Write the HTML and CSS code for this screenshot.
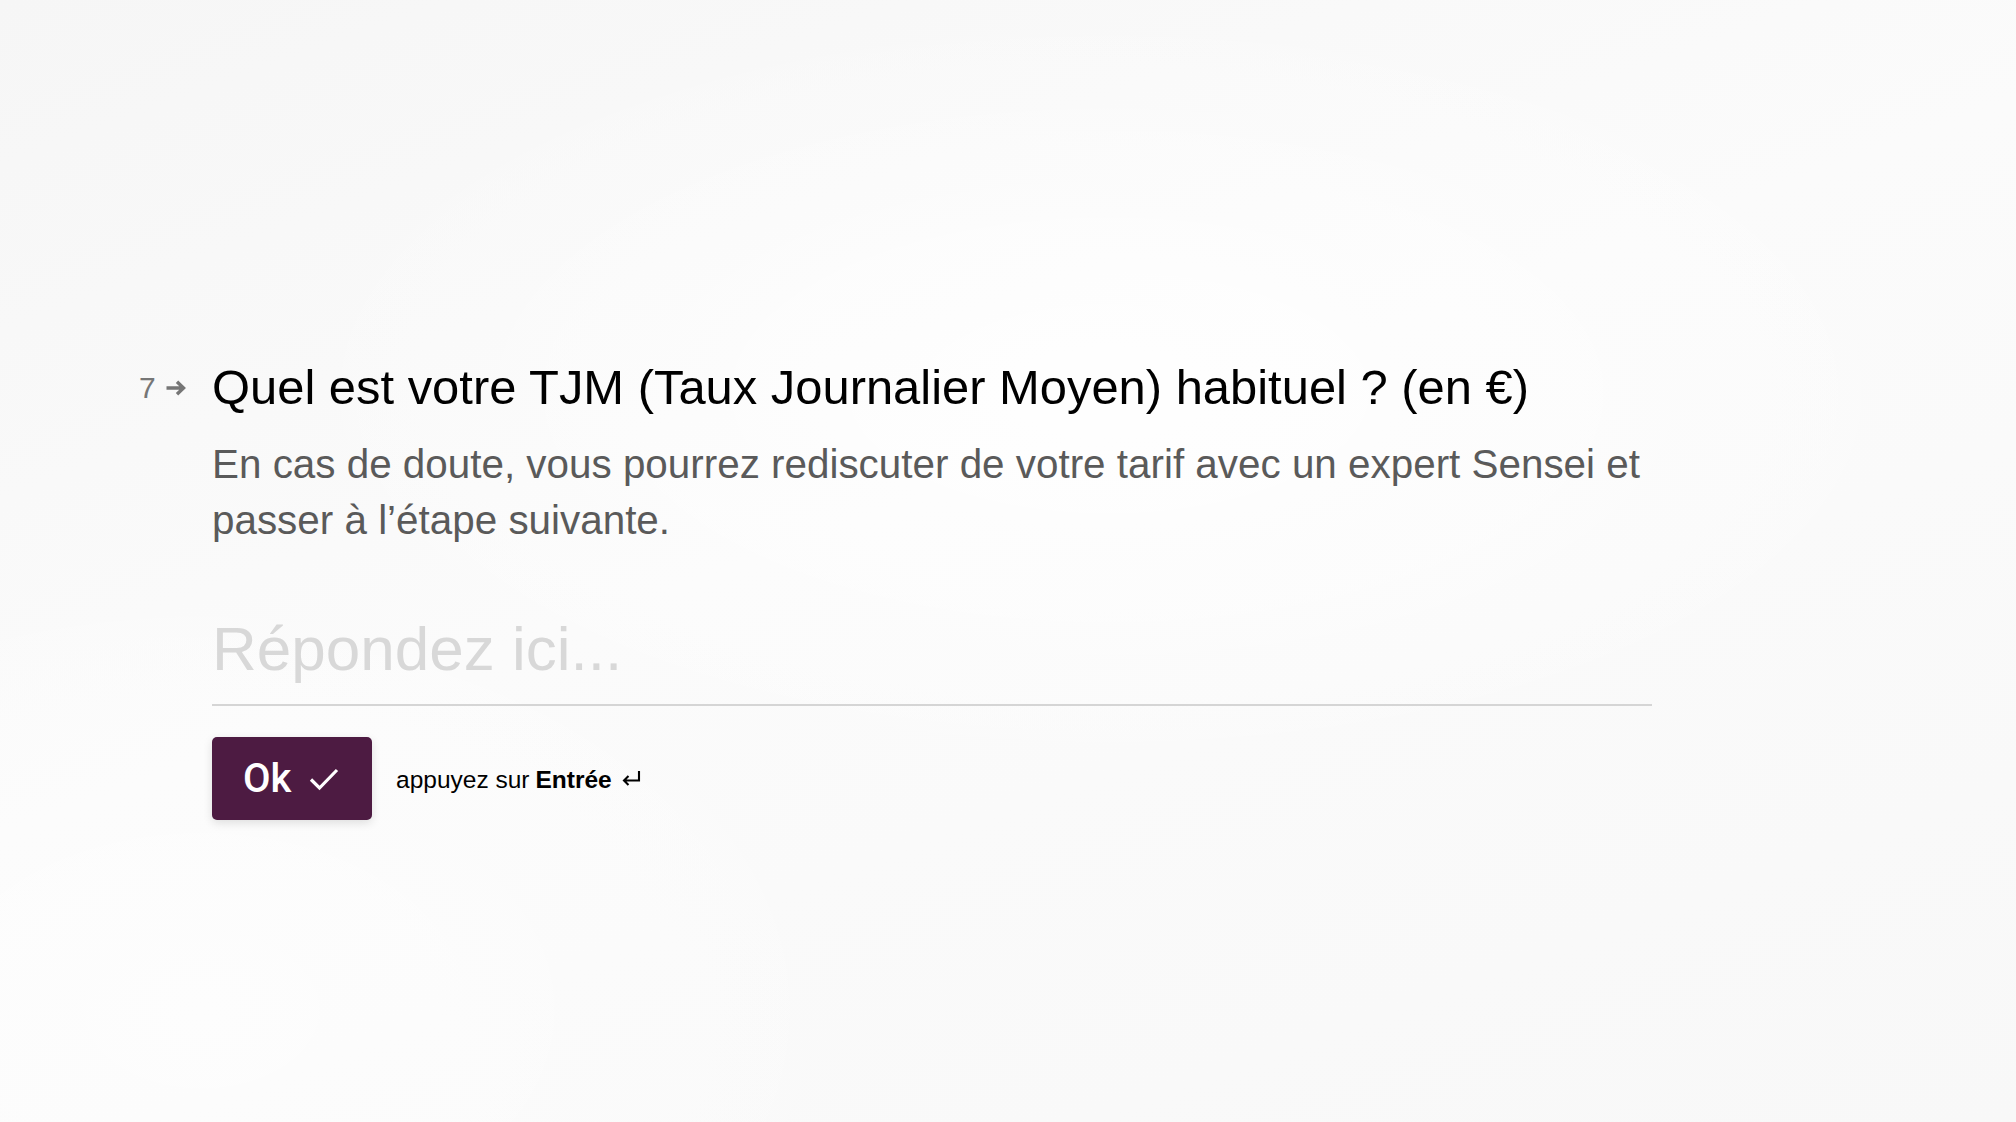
FILE: index.html
```html
<!DOCTYPE html>
<html lang="fr">
<head>
<meta charset="utf-8">
<title>Quel est votre TJM ?</title>
<link rel="stylesheet" href="styles.css">
</head>
<body>
<main class="page">
  <section class="form">
    <div class="question">
      <span class="counter">
        <span class="num">7</span>
        <svg class="arrow" width="22" height="18" viewBox="0 0 22 18" aria-hidden="true">
          <path d="M1.5 9 H18.5 M12 2.8 L18.5 9 L12 15.2" fill="none" stroke="currentColor" stroke-width="3.4" stroke-linecap="butt" stroke-linejoin="miter"/>
        </svg>
      </span>
      <h1 class="title">Quel est votre TJM (Taux Journalier Moyen) habituel ? (en €)</h1>
    </div>
    <p class="desc">En cas de doute, vous pourrez rediscuter de votre tarif avec un expert Sensei et passer à l’étape suivante.</p>
    <div class="answer">
      <input class="field" type="text" placeholder="Répondez ici...">
    </div>
    <div class="actions">
      <button class="ok" type="button">
        <span>Ok</span>
        <svg class="check" width="30" height="24" viewBox="0 0 30 24" aria-hidden="true">
          <path d="M2 12.5 L10.5 21 L28 3" fill="none" stroke="currentColor" stroke-width="3.2"/>
        </svg>
      </button>
      <span class="hint">appuyez sur <strong>Entrée</strong>
        <svg class="enter" width="21" height="17" viewBox="0 0 21 17" aria-hidden="true">
          <path d="M18 1 V10.5 H3 M7.5 6 L3 10.5 L7.5 15" fill="none" stroke="currentColor" stroke-width="2.1"/>
        </svg>
      </span>
    </div>
  </section>
</main>
</body>
</html>
```
FILE: styles.css
```css
html, body {
  margin: 0;
  padding: 0;
}

body {
  min-height: 100vh;
  font-family: "Liberation Sans", Arial, Helvetica, sans-serif;
  background-color: #f9f9f9;
  background-image:
    radial-gradient(ellipse 60% 50% at 55% 35%, rgba(255,255,255,0.9), rgba(255,255,255,0) 70%),
    radial-gradient(ellipse 50% 60% at 10% 90%, rgba(255,255,255,0.6), rgba(255,255,255,0) 70%),
    linear-gradient(160deg, #f6f6f6 0%, #fbfbfb 45%, #f8f8f8 100%);
  color: #000;
}

.page {
  padding: 358px 0 0 212px;
}

.form {
  width: 1440px;
}

.question {
  display: flex;
  align-items: center;
}

.counter {
  display: flex;
  align-items: center;
  gap: 9px;
  width: 73px;
  margin-left: -73px;
  padding-left: 0;
  box-sizing: border-box;
  color: #767676;
  font-size: 30px;
  line-height: 34px;
  padding-top: 2px;
}

.arrow {
  display: block;
}

.title {
  margin: 0;
  font-size: 48.9px;
  line-height: 58px;
  font-weight: 400;
  color: #000;
}

.desc {
  margin: 20px 0 0;
  font-size: 40.4px;
  line-height: 56px;
  color: #5a5a5a;
}

.answer {
  margin-top: 58px;
}

.field {
  display: block;
  width: 100%;
  box-sizing: border-box;
  margin: 0;
  padding: 0 0 14px;
  border: 0;
  border-bottom: 2px solid #d5d5d5;
  background: transparent;
  font-family: "Liberation Sans", Arial, Helvetica, sans-serif;
  font-size: 62px;
  line-height: 84px;
  height: 100px;
  color: #000;
  outline: none;
}

.field::placeholder {
  color: #d8d8d8;
  opacity: 1;
}

.actions {
  display: flex;
  align-items: center;
  gap: 24px;
  margin-top: 31px;
}

.ok {
  display: flex;
  align-items: center;
  gap: 18px;
  height: 83px;
  width: 160px;
  padding: 0 0 0 31px;
  box-sizing: border-box;
  border: 0;
  border-radius: 5px;
  background: #4d1b42;
  color: #fff;
  font-family: Roboto, "Liberation Sans", sans-serif;
  font-size: 40px;
  font-weight: 500;
  box-shadow: 0 3px 10px rgba(0, 0, 0, 0.12);
  cursor: pointer;
}

.check {
  display: block;
}

.hint {
  display: flex;
  align-items: center;
  gap: 7px;
  font-size: 24.5px;
  color: #000;
  padding-top: 3px;
}

.hint strong {
  font-weight: 700;
  margin-left: -1px;
}

.enter {
  display: block;
  margin-left: 2px;
  margin-top: -4px;
}
```
